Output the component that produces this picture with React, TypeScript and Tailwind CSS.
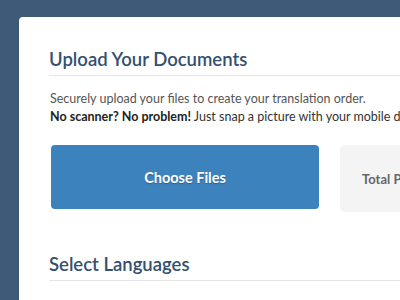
export default function App() {
  return (
    <div className="h-[300px] w-[400px] overflow-hidden bg-[#3e5a78] pl-[19px] pt-[17px] font-['Lato','Liberation_Sans',sans-serif]">
      <div className="h-[400px] w-[520px] rounded-tl-[4px] bg-white pl-[30px] pt-[30px]">
        <h2 className="text-[18.5px] font-semibold leading-[24px] text-[#33506f]">Upload Your Documents</h2>
        <div className="mt-[4px] h-px w-full bg-[#e6e6e6]" />
        <div className="mt-[14px] pl-px text-[12.5px] leading-[18px] text-[#555]">
          <p>Securely upload your files to create your translation order.</p>
          <p className="text-[#333]">
            <span className="font-bold text-[#222]">No scanner? No problem!</span> Just snap a picture with your mobile device.
          </p>
        </div>
        <div className="mt-[19px] flex gap-[21px] pl-[2px]">
          <button className="flex h-[64px] w-[268px] shrink-0 items-center justify-center rounded-[4px] bg-[#3c82bd] pt-[2px] text-[14.5px] font-bold text-white [text-shadow:0_1px_1px_rgba(0,0,0,0.25)]">
            Choose Files
          </button>
          <div className="flex h-[67px] w-[200px] shrink-0 items-center rounded-[5px] bg-[#f4f4f4] pl-[22px] pt-[2px] text-[13px] font-bold text-[#666]">
            Total Pages
          </div>
        </div>
        <h2 className="mt-[40px] text-[18.5px] font-semibold leading-[24px] text-[#33506f]">Select Languages</h2>
        <div className="mt-[4px] h-px w-full bg-[#e6e6e6]" />
      </div>
    </div>
  );
}
